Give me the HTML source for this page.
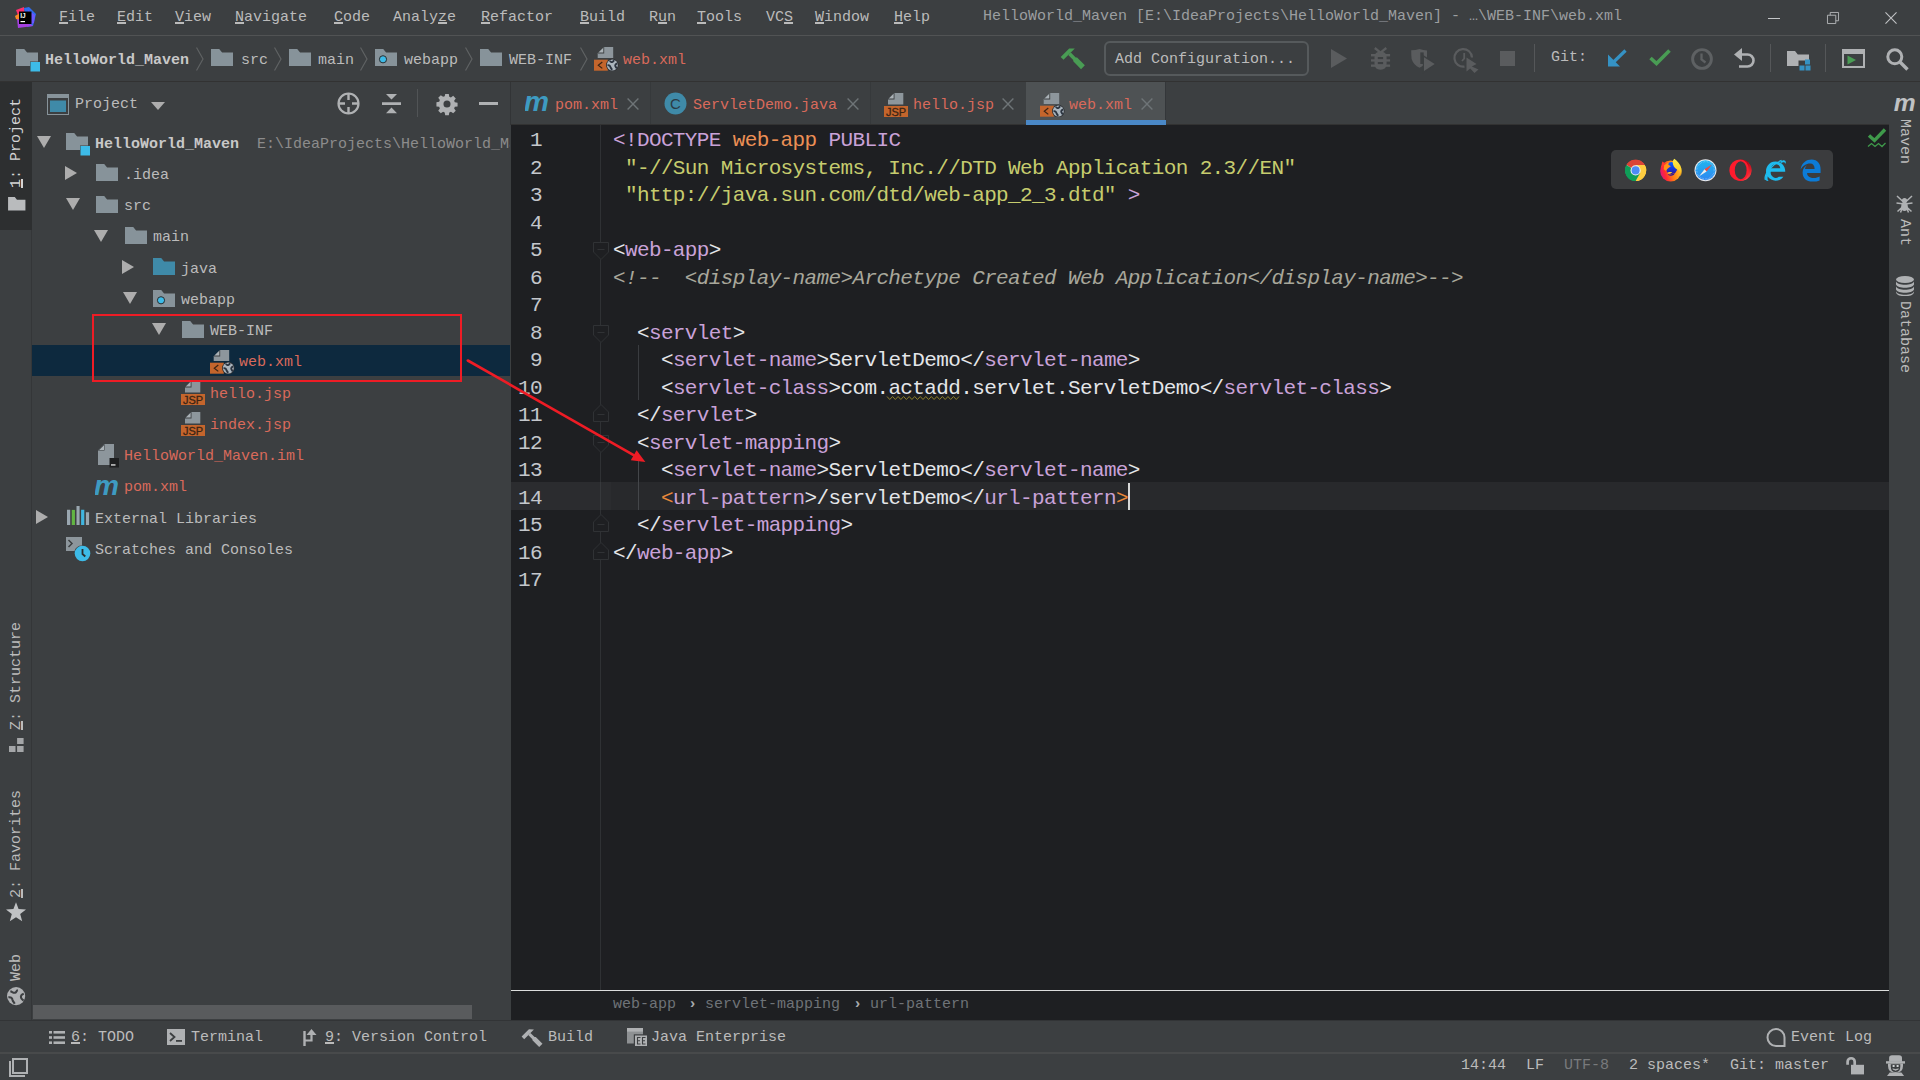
<!DOCTYPE html>
<html lang="en">
<head>
<meta charset="utf-8">
<title>HelloWorld_Maven - web.xml</title>
<style>
*{box-sizing:border-box;margin:0;padding:0}
html,body{width:1920px;height:1080px;overflow:hidden;background:#3c3f41}
body{position:relative;font-family:"Liberation Mono","DejaVu Sans Mono",monospace;font-size:15px;color:#bbbbbb;-webkit-font-smoothing:antialiased}
.a{position:absolute}
.t{position:absolute;white-space:pre;line-height:20px;height:20px;font-size:15px;color:#bbbbbb}
.u{text-decoration:underline;text-underline-offset:0.500px;text-decoration-thickness:1.500px}
.red{color:#d96a5b}
.dim{color:#8c8c8c}
.v{position:absolute;white-space:pre;font-size:15px;line-height:20px;height:20px;transform-origin:0 0;transform:rotate(-90deg)}
.vr{position:absolute;white-space:pre;font-size:15px;line-height:20px;height:20px;transform-origin:0 0;transform:rotate(90deg)}
svg{position:absolute;overflow:visible}
/* editor */
#ed{position:absolute;left:511px;top:125px;width:1378px;height:896px;background:#1e1f22}
.ln{position:absolute;left:0;width:31px;text-align:right;font-size:21px;letter-spacing:-0.63px;line-height:28px;height:28px;margin-top:2px;color:#c4c7cc;white-space:pre}
.cl{position:absolute;left:102px;font-size:21px;letter-spacing:-0.63px;line-height:28px;height:28px;margin-top:2px;color:#e4e6e9;white-space:pre}
.tg{color:#c9a2d8}
.st{color:#c6cc6e}
.kw{color:#ec8f55}
.cm{color:#a8a79b;font-style:italic}
.or{color:#e8883a}
</style>
</head>
<body>
<svg width="0" height="0" style="left:0;top:0">
<defs>
<symbol id="fold" viewBox="0 0 22 17"><path d="M0 0h8.2l2.9 3.6H22V17H0z" fill="#87939a"/></symbol>
<symbol id="foldb" viewBox="0 0 22 17"><path d="M0 0h8.2l2.9 3.6H22V17H0z" fill="#3f8aa8"/></symbol>
<symbol id="foldw" viewBox="0 0 22 17"><path d="M0 0h8.2l2.9 3.6H22V17H0z" fill="#87939a"/><circle cx="8" cy="10.3" r="3.6" fill="#3dbbe8" stroke="#2b2d2e" stroke-width="1"/></symbol>
<symbol id="foldm" viewBox="0 0 24 23"><path d="M0 0h8.2l2.9 3.6H22V12.5H14V17H0z" fill="#87939a"/><rect x="14.5" y="13" width="9.5" height="9.5" fill="#3dbbe8"/></symbol>
<symbol id="chev" viewBox="0 0 8 24"><path d="M0.5 0.5L7 12L0.5 23.5" fill="none" stroke="#5f6263" stroke-width="1.2"/></symbol>
<symbol id="webxml" viewBox="0 0 25 24"><path d="M3.700 11V6.500L10.200 0H19.200V11z" fill="#8d969c"/><path d="M3.700 6.500L10.200 0V6.500z" fill="#3c3f41"/><path d="M4.500 5.600L9.300 0.800V5.600z" fill="#aab2b7"/><rect x="0" y="12.700" width="13.800" height="11" fill="#c4652c"/><path d="M8.300 15L4.300 18.200L8.300 21.400" fill="none" stroke="#3b2414" stroke-width="1.200"/><circle cx="18.300" cy="18.100" r="6.300" fill="#2b2d30"/><circle cx="18.300" cy="18.100" r="5.500" fill="#aab5be"/><path d="M16 13.600c.3 1.500 1.600 1.700 2.600 1.300c1-.5 1.200-1.300 1-2M13.500 18.500c1-.6 2.400-.2 2.700 1c.3 1.300 1.200 2 1.800 3.300M23.300 16.500c-1.300.2-2.400 1.200-2 2.600c.3 1.100 1.400 1.500 1.500 2.600" fill="none" stroke="#2b3440" stroke-width="1.900"/></symbol>
<symbol id="jsp" viewBox="0 0 24 24"><path d="M4 11.500V6.500L10.500 0H19.300V11.500z" fill="#8d969c"/><path d="M4 6.500L10.500 0V6.500z" fill="#3c3f41"/><path d="M4.800 5.600L9.600 0.800V5.600z" fill="#aab2b7"/><rect x="0" y="13" width="24" height="11" fill="#c4652c"/><text x="12" y="22.600" font-family="Liberation Sans,sans-serif" font-size="11" text-anchor="middle" fill="#3b2414" stroke="#3b2414" stroke-width="0.300">JSP</text></symbol>
<symbol id="mvn" viewBox="0 0 24 16"><text x="-1" y="15.5" font-family="Liberation Sans,sans-serif" font-weight="bold" font-style="italic" font-size="27" fill="#3e9bc2" textLength="25" lengthAdjust="spacingAndGlyphs">m</text></symbol>
<symbol id="x" viewBox="0 0 12 12"><path d="M0.600 0.600L11.400 11.400M11.400 0.600L0.600 11.400" fill="none" stroke="#6e7477" stroke-width="1.400"/></symbol>
<symbol id="ad" viewBox="0 0 14 12"><path d="M0 0H14L7 12z" fill="#adadad"/></symbol>
<symbol id="ar" viewBox="0 0 12 14"><path d="M0 0L12 7L0 14z" fill="#adadad"/></symbol>
</defs>
</svg>
<!-- MENU BAR -->
<div class="a" id="menubar" style="left:0;top:0;width:1920px;height:35px;background:#3c3f41"></div>
<div class="a" style="left:0;top:35px;width:1920px;height:1px;background:#515354"></div>
<svg style="left:15px;top:7px" width="21" height="21" viewBox="0 0 21 21">
<path d="M1 3L9 0L10 8L4 11z" fill="#fc2f6e"/><path d="M0 9L5 6L6 14L1 12z" fill="#fd8a26"/><path d="M9 1L14 0L21 7L18 19L12 20z" fill="#2f6df0"/><path d="M2 12L12 14L18 19L3 21z" fill="#a63fe0"/><path d="M13 3L20 8L19 16L14 18z" fill="#6b57ff"/>
<rect x="4" y="4.5" width="12.5" height="12.5" fill="#000"/><rect x="5.5" y="14" width="4.5" height="1.2" fill="#fff"/>
<text x="5.2" y="11.3" font-family="Liberation Sans,sans-serif" font-weight="bold" font-size="6.5" fill="#fff">IJ</text></svg>
<div class="t" style="left:59px;top:8px"><span class="u">F</span>ile</div>
<div class="t" style="left:117px;top:8px"><span class="u">E</span>dit</div>
<div class="t" style="left:175px;top:8px"><span class="u">V</span>iew</div>
<div class="t" style="left:235px;top:8px"><span class="u">N</span>avigate</div>
<div class="t" style="left:334px;top:8px"><span class="u">C</span>ode</div>
<div class="t" style="left:393px;top:8px">Analy<span class="u">z</span>e</div>
<div class="t" style="left:481px;top:8px"><span class="u">R</span>efactor</div>
<div class="t" style="left:580px;top:8px"><span class="u">B</span>uild</div>
<div class="t" style="left:649px;top:8px">R<span class="u">u</span>n</div>
<div class="t" style="left:697px;top:8px"><span class="u">T</span>ools</div>
<div class="t" style="left:766px;top:8px">VC<span class="u">S</span></div>
<div class="t" style="left:815px;top:8px"><span class="u">W</span>indow</div>
<div class="t" style="left:894px;top:8px"><span class="u">H</span>elp</div>
<div class="t" style="left:983px;top:7px;color:#9b9ea0">HelloWorld_Maven [E:\IdeaProjects\HelloWorld_Maven] - …\WEB-INF\web.xml</div>
<svg style="left:1768px;top:18px" width="12" height="1" viewBox="0 0 12 1"><rect width="12" height="1" fill="#c4c6c8"/></svg>
<svg style="left:1827px;top:12px" width="12" height="12" viewBox="0 0 13 13"><path d="M0.5 3.5h9v9h-9zM3.5 3.5v-3h9v9h-3" fill="none" stroke="#b4b6b8" stroke-width="1"/></svg>
<svg style="left:1885px;top:12px" width="12" height="12" viewBox="0 0 13 13"><path d="M0.5 0.5L12.5 12.5M12.5 0.5L0.5 12.5" fill="none" stroke="#c0c2c4" stroke-width="1.2"/></svg>
<!-- NAV BAR -->
<div class="a" id="navbar" style="left:0;top:36px;width:1920px;height:45px;background:#3c3f41"></div>
<div class="a" style="left:0;top:81px;width:1920px;height:1px;background:#323232"></div>
<svg style="left:16px;top:49px" width="24" height="23"><use href="#foldm"/></svg>
<div class="t" style="left:45px;top:51px;font-weight:bold;color:#c8c8c8">HelloWorld_Maven</div>
<svg style="left:196px;top:47px" width="8" height="24"><use href="#chev"/></svg>
<svg style="left:211px;top:49px" width="22" height="17"><use href="#fold"/></svg>
<div class="t" style="left:241px;top:51px">src</div>
<svg style="left:274px;top:47px" width="8" height="24"><use href="#chev"/></svg>
<svg style="left:289px;top:49px" width="22" height="17"><use href="#fold"/></svg>
<div class="t" style="left:318px;top:51px">main</div>
<svg style="left:360px;top:47px" width="8" height="24"><use href="#chev"/></svg>
<svg style="left:375px;top:49px" width="22" height="17"><use href="#foldw"/></svg>
<div class="t" style="left:404px;top:51px">webapp</div>
<svg style="left:465px;top:47px" width="8" height="24"><use href="#chev"/></svg>
<svg style="left:480px;top:49px" width="22" height="17"><use href="#fold"/></svg>
<div class="t" style="left:509px;top:51px">WEB-INF</div>
<svg style="left:580px;top:47px" width="8" height="24"><use href="#chev"/></svg>
<svg style="left:594px;top:47px" width="25" height="24"><use href="#webxml"/></svg>
<div class="t red" style="left:623px;top:51px">web.xml</div>
<svg style="left:1060px;top:47px" width="26" height="23" viewBox="0 0 26 23"><g transform="translate(7.400,6.100) rotate(-45)" fill="#499c54"><path d="M-7.500 -2H4.500L8.500 2H-7.500z"/><path d="M-0.800 2H2.800V9L3.700 10V21H-1.700V10L-0.800 9z"/></g></svg>
<div class="a" style="left:1104px;top:41px;width:205px;height:35px;border:2px solid #565a5c;border-radius:6px"></div>
<div class="t" style="left:1115px;top:50px">Add Configuration...</div>
<svg style="left:1331px;top:49px" width="16" height="19" viewBox="0 0 16 19"><path d="M0 0L16 9.500L0 19z" fill="#5a5c5e"/></svg>
<svg style="left:1370px;top:47px" width="21" height="23" viewBox="0 0 21 23"><g fill="#5a5c5e"><path d="M4.500 10Q4.500 4.800 10.500 4.800Q16.600 4.800 16.600 10V16.500Q16.600 22.700 10.500 22.700Q4.500 22.700 4.500 16.500z"/><rect x="1" y="7" width="19.100" height="2.400"/><rect x="1" y="12.300" width="19.100" height="2.300"/><rect x="1" y="17.500" width="19.100" height="2.300"/></g><path d="M4.800 1L10.500 5.600L16.300 1" fill="none" stroke="#5a5c5e" stroke-width="2.300"/><rect x="7.800" y="10" width="5.300" height="2.100" fill="#3c3f41"/><rect x="7.800" y="15" width="5.300" height="2.100" fill="#3c3f41"/></svg>
<svg style="left:1411px;top:49px" width="24" height="23" viewBox="0 0 24 23"><path d="M0.200 1.300Q4.500 1.200 8.500 -0.100Q12.500 1.200 16 1.500Q16.200 6 15.800 10Q14.500 16 8.500 18.800Q2.500 16 0.600 10Q0.200 6 0.200 1.300z" fill="#5a5c5e"/><rect x="9.300" y="3.400" width="3.400" height="11.600" fill="#3c3f41"/><path d="M11.800 5.800L25.800 15L11.800 24.200z" fill="#3c3f41"/><path d="M13 8.200L23.700 14.900L13 22z" fill="#5a5c5e"/></svg>
<svg style="left:1454px;top:48px" width="26" height="26" viewBox="0 0 26 26"><path d="M10.500 18.600A8.800 8.800 0 1 1 18 9.500" fill="none" stroke="#5a5c5e" stroke-width="2.200"/><path d="M10.200 5v5.500L8 13" fill="none" stroke="#5a5c5e" stroke-width="1.800"/><path d="M12.500 9.500L22.500 16L17.800 18.500L24.500 21.500L20.500 25L16.200 20.500L12.500 23.500z" fill="#5a5c5e"/></svg>
<div class="a" style="left:1500px;top:51px;width:15px;height:15px;background:#5a5c5e"></div>
<div class="a" style="left:1534px;top:44px;width:1px;height:28px;background:#555759"></div>
<div class="t" style="left:1551px;top:48px">Git:</div>
<svg style="left:1607px;top:49px" width="20" height="18" viewBox="0 0 20 18"><path d="M18.500 1.500L4 15.500" stroke="#3592c4" stroke-width="3.200" fill="none"/><path d="M1 5.500V17.500H13z" fill="#3592c4"/></svg>
<svg style="left:1649px;top:49px" width="22" height="17" viewBox="0 0 22 17"><path d="M1.500 9L7.500 14.500L20.500 1.500" stroke="#499c54" stroke-width="3.600" fill="none"/></svg>
<svg style="left:1691px;top:48px" width="22" height="22" viewBox="0 0 22 22"><circle cx="11" cy="11" r="9.400" fill="none" stroke="#5e6163" stroke-width="2.900"/><path d="M10.500 5.500v6l4 3" fill="none" stroke="#5e6163" stroke-width="2.300"/></svg>
<svg style="left:1734px;top:48px" width="22" height="20" viewBox="0 0 22 20"><path d="M0 6.500L8 0V13z" fill="#afb1b3"/><path d="M6 6.500H13.500A6 6 0 0 1 13.500 18.500H5" fill="none" stroke="#afb1b3" stroke-width="2.600"/></svg>
<div class="a" style="left:1770px;top:44px;width:1px;height:28px;background:#555759"></div>
<svg style="left:1787px;top:51px" width="24" height="20" viewBox="0 0 24 20"><path d="M0 0h8l2.800 3.500H22V9.500H11.500V15H0z" fill="#afb1b3"/><rect x="18" y="8.500" width="5" height="5" fill="#3592c4"/><rect x="12.500" y="14.500" width="5" height="5" fill="#3592c4"/><rect x="18.500" y="14.500" width="5" height="5" fill="#3592c4"/></svg>
<div class="a" style="left:1825px;top:44px;width:1px;height:28px;background:#555759"></div>
<svg style="left:1842px;top:49px" width="23" height="19" viewBox="0 0 23 19"><path d="M0 0H23V19H0zM2 5V17H21V5z" fill="#afb1b3" fill-rule="evenodd"/><path d="M5.500 6.500L14 11L5.500 15.500z" fill="#499c54"/></svg>
<svg style="left:1886px;top:48px" width="23" height="23" viewBox="0 0 23 23"><circle cx="8.800" cy="8.800" r="7" fill="none" stroke="#afb1b3" stroke-width="3"/><path d="M13.500 13.500L21.500 21.500" stroke="#afb1b3" stroke-width="3.400"/></svg>
<!-- LEFT STRIPE -->
<div class="a" id="lstripe" style="left:0;top:82px;width:32px;height:939px;background:#3c3f41"></div>
<div class="v" style="left:6.500px;top:730px"><span class="u">Z</span>: Structure</div>
<svg style="left:9px;top:738px" width="14.600" height="14" viewBox="0 0 14.600 14"><rect x="8.100" y="0" width="6.500" height="6" fill="#a4a6a8"/><rect x="0" y="8" width="6.500" height="6" fill="#a4a6a8"/><rect x="8.100" y="8" width="6.500" height="6" fill="#a4a6a8"/></svg>
<div class="v" style="left:6.500px;top:898px"><span class="u">2</span>: Favorites</div>
<svg style="left:6px;top:902px" width="20" height="19.500" viewBox="0 0 21 20"><path d="M10.500 0L13.200 7.200L21 7.600L14.900 12.400L17 20L10.500 15.700L4 20L6.100 12.400L0 7.600L7.800 7.200z" fill="#c0c2c4"/></svg>
<div class="v" style="left:6.500px;top:981px">Web</div>
<svg style="left:7px;top:987.300px" width="18.200" height="18.200" viewBox="0 0 19 19"><circle cx="9.500" cy="9.500" r="9.500" fill="#afb1b3"/><path d="M3.500 4.500c2 .5 3 2 5 1.500c1.500-.5 1.200-2.300 2.800-2.800M1.500 11c2-1 4 .4 4.300 2.500c.3 1.500 1.500 2.500 2.200 4M17.500 7c-2 .6-3.500 2-2.800 4.200c.5 1.500 2 2.200 2.500 3" fill="none" stroke="#3c3f41" stroke-width="2.200"/></svg>
<div class="a" style="left:31px;top:82px;width:1px;height:939px;background:#343638"></div>
<!-- PROJECT PANEL -->
<div class="a" id="proj" style="left:32px;top:82px;width:478px;height:939px;background:#3c3f41"></div>
<div class="a" style="left:0;top:82px;width:32px;height:148px;background:#2d2f30"></div>
<div class="v" style="left:6.500px;top:188px;color:#d4d4d4"><span class="u">1</span>: Project</div>
<svg style="left:7.500px;top:197px" width="17.500" height="13.500" viewBox="0 0 18 14"><path d="M0 0h7l2.200 2.800H18V14H0z" fill="#b9bbbd"/></svg>
<svg style="left:47px;top:94px" width="22" height="21" viewBox="0 0 22 21"><rect x="0.5" y="0.5" width="21" height="20" fill="#3c3f41" stroke="#87939a" stroke-width="1"/><rect x="0" y="0" width="22" height="4" fill="#87939a"/><rect x="3" y="6.5" width="16" height="11.5" fill="#3f8aa8"/></svg>
<div class="t" style="left:75px;top:95px">Project</div>
<svg style="left:151px;top:102px" width="14" height="8" viewBox="0 0 14 8"><path d="M0 0H14L7 8z" fill="#adadad"/></svg>
<svg style="left:337px;top:92px" width="23" height="23" viewBox="0 0 23 23"><circle cx="11.5" cy="11.5" r="10" fill="none" stroke="#afb1b3" stroke-width="2.2"/><path d="M11.5 1.5v6.5M11.5 15v6.5M1.5 11.5h6.5M15 11.5h6.5" stroke="#afb1b3" stroke-width="2.4" fill="none"/></svg>
<svg style="left:382px;top:94px" width="19" height="20" viewBox="0 0 19 20"><path d="M4 0H15L9.5 5.5zM0 8.2H19V11H0zM9.5 13.5L15 19.3H4z" fill="#afb1b3"/></svg>
<div class="a" style="left:417px;top:89px;width:1px;height:28px;background:#515456"></div>
<svg style="left:436.500px;top:93.500px" width="20" height="20" viewBox="0 0 21 21"><path fill="#afb1b3" fill-rule="evenodd" d="M8.6 0h3.8l.5 2.9 1.7.7 2.4-1.7 2.7 2.7-1.7 2.4.7 1.7 2.9.5v3.8l-2.9.5-.7 1.7 1.7 2.4-2.7 2.7-2.4-1.7-1.7.7-.5 2.9H8.6l-.5-2.9-1.7-.7-2.4 1.7-2.7-2.7 1.700-2.4-.7-1.700-2.900-.5V8.6l2.900-.500.700-1.700-1.700-2.400 2.700-2.700 2.400 1.700 1.700-.7zM10.500 6.800a3.700 3.700 0 1 0 0 7.400 3.700 3.700 0 0 0 0-7.400z"/></svg>
<div class="a" style="left:479px;top:102px;width:19px;height:3px;background:#afb1b3"></div>
<div class="a" style="left:510px;top:82px;width:1px;height:43px;background:#323436"></div>
<div class="a" id="tree" style="left:0;top:0;width:510px;height:1021px;overflow:hidden">
<div class="a" style="left:32px;top:345px;width:478px;height:31px;background:#0d293e"></div>
<svg style="left:37px;top:136px" width="14" height="12"><use href="#ad"/></svg>
<svg style="left:66px;top:133px" width="24" height="23"><use href="#foldm"/></svg>
<div class="t" style="left:95px;top:135px"><b style="color:#c8c8c8">HelloWorld_Maven</b><span class="dim">  E:\IdeaProjects\HelloWorld_Maven</span></div>
<svg style="left:65px;top:166px" width="12" height="14"><use href="#ar"/></svg>
<svg style="left:96px;top:164px" width="22" height="17"><use href="#fold"/></svg>
<div class="t" style="left:124px;top:166px">.idea</div>
<svg style="left:66px;top:198px" width="14" height="12"><use href="#ad"/></svg>
<svg style="left:96px;top:196px" width="22" height="17"><use href="#fold"/></svg>
<div class="t" style="left:124px;top:197px">src</div>
<svg style="left:94px;top:230px" width="14" height="12"><use href="#ad"/></svg>
<svg style="left:124.500px;top:227px" width="22" height="17"><use href="#fold"/></svg>
<div class="t" style="left:153px;top:228px">main</div>
<svg style="left:122px;top:260px" width="12" height="14"><use href="#ar"/></svg>
<svg style="left:153px;top:258px" width="22" height="17"><use href="#foldb"/></svg>
<div class="t" style="left:181px;top:260px">java</div>
<svg style="left:123px;top:292px" width="14" height="12"><use href="#ad"/></svg>
<svg style="left:153px;top:290px" width="22" height="17"><use href="#foldw"/></svg>
<div class="t" style="left:181px;top:291px">webapp</div>
<svg style="left:152px;top:323px" width="14" height="12"><use href="#ad"/></svg>
<svg style="left:182px;top:321px" width="22" height="17"><use href="#fold"/></svg>
<div class="t" style="left:210px;top:322px">WEB-INF</div>
<svg style="left:210px;top:350px" width="25" height="24"><use href="#webxml"/></svg>
<div class="t red" style="left:239px;top:353px">web.xml</div>
<svg style="left:181px;top:381px" width="24" height="24"><use href="#jsp"/></svg>
<div class="t red" style="left:210px;top:385px">hello.jsp</div>
<svg style="left:181px;top:412px" width="24" height="24"><use href="#jsp"/></svg>
<div class="t red" style="left:210px;top:416px">index.jsp</div>
<svg style="left:98px;top:444px" width="21" height="24" viewBox="0 0 21 24"><path d="M0 21V6.500L6.500 0H16V21z" fill="#8d969c"/><path d="M0 6.500L6.500 0V6.500z" fill="#3c3f41"/><path d="M1.200 6L6 1.200V6z" fill="#aab2b7"/><rect x="11.500" y="14" width="9.500" height="9.500" fill="#1e1f20"/><rect x="13" y="20.300" width="4.500" height="1.300" fill="#e8e8e8"/></svg>
<div class="t red" style="left:124px;top:447px">HelloWorld_Maven.iml</div>
<svg style="left:95px;top:479px" width="24" height="16"><use href="#mvn"/></svg>
<div class="t red" style="left:124px;top:478px">pom.xml</div>
<svg style="left:36px;top:510px" width="12" height="14"><use href="#ar"/></svg>
<svg style="left:66.500px;top:506.300px" width="22.300" height="19" viewBox="0 0 22.300 19"><rect x="0" y="3.750" width="3.200" height="15.250" fill="#9aa7b0"/><rect x="4.750" y="3.900" width="3.200" height="15.100" fill="#62b543"/><rect x="9.500" y="0" width="3.100" height="19" fill="#9aa7b0"/><rect x="14.100" y="3.750" width="3.200" height="15.250" fill="#40b6e0"/><rect x="18.900" y="6.250" width="3.200" height="12.750" fill="#9aa7b0"/></svg>
<div class="t" style="left:95px;top:510px">External Libraries</div>
<svg style="left:66px;top:537px" width="25" height="25" viewBox="0 0 25 25"><path d="M0 0H16V8.500A8 8 0 0 0 8.500 14H0z" fill="#8d969c"/><path d="M2.500 3L6 6.500L2.500 10" fill="none" stroke="#3c3f41" stroke-width="1.500"/><circle cx="16.500" cy="16.500" r="7.800" fill="#3dbbe8"/><path d="M16.500 12v5l2.800 2.500" fill="none" stroke="#2b2d2e" stroke-width="1.800"/></svg>
<div class="t" style="left:95px;top:541px">Scratches and Consoles</div>
</div>
<div class="a" style="left:33px;top:1005px;width:439px;height:14px;background:#595b5d"></div>
<div class="a" style="left:92px;top:314px;width:370px;height:68px;border:2px solid #ee1c25"></div>
<!-- EDITOR TABS -->
<div class="a" id="tabs" style="left:511px;top:82px;width:1378px;height:43px;background:#3c3f41"></div>
<div class="a" style="left:1026px;top:82px;width:139px;height:43px;background:#4e5254"></div>
<div class="a" style="left:511px;top:124px;width:1378px;height:1px;background:#323232"></div>
<div class="a" style="left:1165px;top:82px;width:1px;height:38px;background:#34373a"></div>
<div class="a" style="left:1026px;top:120px;width:140px;height:5px;background:#4a88c7"></div>
<div class="a" style="left:650px;top:82px;width:1px;height:42px;background:#36393b"></div>
<div class="a" style="left:870px;top:82px;width:1px;height:42px;background:#36393b"></div>
<svg style="left:525px;top:95px" width="24" height="16"><use href="#mvn"/></svg>
<div class="t red" style="left:555px;top:96px">pom.xml</div>
<svg style="left:627px;top:98px" width="12" height="12"><use href="#x"/></svg>
<svg style="left:664px;top:92px" width="23" height="23" viewBox="0 0 23 23"><circle cx="11.500" cy="11.500" r="11" fill="#3f8aa8"/><text x="11.500" y="16.500" text-anchor="middle" font-family="Liberation Sans,sans-serif" font-size="15" fill="#2b3b44">C</text></svg>
<div class="t red" style="left:693px;top:96px">ServletDemo.java</div>
<svg style="left:847px;top:98px" width="12" height="12"><use href="#x"/></svg>
<svg style="left:884px;top:93px" width="24" height="24"><use href="#jsp"/></svg>
<div class="t red" style="left:913px;top:96px">hello.jsp</div>
<svg style="left:1002px;top:98px" width="12" height="12"><use href="#x"/></svg>
<svg style="left:1040px;top:93px" width="25" height="24"><use href="#webxml"/></svg>
<div class="t red" style="left:1069px;top:96px">web.xml</div>
<svg style="left:1141px;top:98px" width="12" height="12"><use href="#x"/></svg>
<!-- EDITOR -->
<div id="ed">
<div class="a" style="left:89px;top:0;width:1px;height:865px;background:#2f3134"></div>
<div class="a" style="left:0;top:357px;width:100px;height:28px;background:#2b2c2f"></div>
<div class="a" style="left:100px;top:357px;width:1278px;height:28px;background:#28292c"></div>
<div class="a" style="left:89px;top:357px;width:1px;height:28px;background:#37393c"></div>
<div class="a" style="left:127px;top:220px;width:1px;height:55px;background:#3a3c40"></div>
<div class="a" style="left:127px;top:330px;width:1px;height:55px;background:#44464a"></div>
<svg style="left:82px;top:117.0px" width="16" height="18" viewBox="0 0 16 18"><path d="M0.500 0.500H15.500V10L8 17.500L0.500 10z" fill="#1e1f22" stroke="#303235" stroke-width="1"/><path d="M4.500 7.500H11.500" stroke="#303235" stroke-width="1"/></svg><svg style="left:82px;top:199.5px" width="16" height="18" viewBox="0 0 16 18"><path d="M0.500 0.500H15.500V10L8 17.500L0.500 10z" fill="#1e1f22" stroke="#303235" stroke-width="1"/><path d="M4.500 7.500H11.500" stroke="#303235" stroke-width="1"/></svg><svg style="left:82px;top:279.0px" width="16" height="18" viewBox="0 0 16 18"><path d="M0.500 17.500H15.500V8L8 0.500L0.500 8z" fill="#1e1f22" stroke="#303235" stroke-width="1"/><path d="M4.500 10.500H11.500" stroke="#303235" stroke-width="1"/></svg><svg style="left:82px;top:309.5px" width="16" height="18" viewBox="0 0 16 18"><path d="M0.500 0.500H15.500V10L8 17.500L0.500 10z" fill="#1e1f22" stroke="#303235" stroke-width="1"/><path d="M4.500 7.500H11.500" stroke="#303235" stroke-width="1"/></svg><svg style="left:82px;top:389.0px" width="16" height="18" viewBox="0 0 16 18"><path d="M0.500 17.500H15.500V8L8 0.500L0.500 8z" fill="#1e1f22" stroke="#303235" stroke-width="1"/><path d="M4.500 10.500H11.500" stroke="#303235" stroke-width="1"/></svg><svg style="left:82px;top:416.5px" width="16" height="18" viewBox="0 0 16 18"><path d="M0.500 17.500H15.500V8L8 0.500L0.500 8z" fill="#1e1f22" stroke="#303235" stroke-width="1"/><path d="M4.500 10.500H11.500" stroke="#303235" stroke-width="1"/></svg>
<div class="a" style="left:0;top:865px;width:1378px;height:1px;background:#dcdddd"></div>
<div class="t" style="left:102px;top:870px;color:#6f7378">web-app</div>
<div class="t" style="left:177px;top:870px;color:#a8abae;font-weight:bold">›</div>
<div class="t" style="left:194px;top:870px;color:#6f7378">servlet-mapping</div>
<div class="t" style="left:342px;top:870px;color:#a8abae;font-weight:bold">›</div>
<div class="t" style="left:359px;top:870px;color:#6f7378">url-pattern</div>
<svg style="left:376px;top:271px" width="73" height="4" viewBox="0 0 73 4"><path d="M0.00 0.5L2.77 3.5L5.54 0.5L8.31 3.5L11.08 0.5L13.85 3.5L16.62 0.5L19.39 3.5L22.16 0.5L24.93 3.5L27.70 0.5L30.47 3.5L33.24 0.5L36.01 3.5L38.78 0.5L41.55 3.5L44.32 0.5L47.09 3.5L49.86 0.5L52.63 3.5L55.40 0.5L58.17 3.5L60.94 0.5L63.71 3.5L66.48 0.5L69.25 3.5L72.02 0.5" fill="none" stroke="#8d7f2b" stroke-width="1"/></svg>
<div class="a" style="left:617px;top:358px;width:2px;height:27px;background:#d8d8d8"></div>
<svg style="left:1356px;top:3px" width="20" height="21" viewBox="0 0 20 21"><path d="M2 7.500L7.500 12.500L18 1.500" fill="none" stroke="#3f9a4b" stroke-width="3.400"/><path d="M1 18.500L4.500 15.500L8 18.500L11.500 15.500L15 18.500L18.500 15" fill="none" stroke="#3f9a4b" stroke-width="1.300"/></svg>
<div class="a" style="left:1100px;top:25px;width:222px;height:39px;background:#3b3c3e;border-radius:5px"></div>
<div class="ln" style="top:0.0px">1</div>
<div class="cl" style="top:0.0px"><span class="tg">&lt;!DOCTYPE </span><span class="kw">web-app</span><span class="tg"> PUBLIC</span></div>
<div class="ln" style="top:27.5px">2</div>
<div class="cl" style="top:27.5px"><span class="st"> "-//Sun Microsystems, Inc.//DTD Web Application 2.3//EN"</span></div>
<div class="ln" style="top:55.0px">3</div>
<div class="cl" style="top:55.0px"><span class="st"> "http://java.sun.com/dtd/web-app_2_3.dtd"</span><span class="tg"> &gt;</span></div>
<div class="ln" style="top:82.5px">4</div>
<div class="ln" style="top:110.0px">5</div>
<div class="cl" style="top:110.0px">&lt;<span class="tg">web-app</span>&gt;</div>
<div class="ln" style="top:137.5px">6</div>
<div class="cl" style="top:137.5px"><span class="cm">&lt;!--  &lt;display-name&gt;Archetype Created Web Application&lt;/display-name&gt;--&gt;</span></div>
<div class="ln" style="top:165.0px">7</div>
<div class="ln" style="top:192.5px">8</div>
<div class="cl" style="top:192.5px">  &lt;<span class="tg">servlet</span>&gt;</div>
<div class="ln" style="top:220.0px">9</div>
<div class="cl" style="top:220.0px">    &lt;<span class="tg">servlet-name</span>&gt;ServletDemo&lt;/<span class="tg">servlet-name</span>&gt;</div>
<div class="ln" style="top:247.5px">10</div>
<div class="cl" style="top:247.5px">    &lt;<span class="tg">servlet-class</span>&gt;com.actadd.servlet.ServletDemo&lt;/<span class="tg">servlet-class</span>&gt;</div>
<div class="ln" style="top:275.0px">11</div>
<div class="cl" style="top:275.0px">  &lt;/<span class="tg">servlet</span>&gt;</div>
<div class="ln" style="top:302.5px">12</div>
<div class="cl" style="top:302.5px">  &lt;<span class="tg">servlet-mapping</span>&gt;</div>
<div class="ln" style="top:330.0px">13</div>
<div class="cl" style="top:330.0px">    &lt;<span class="tg">servlet-name</span>&gt;ServletDemo&lt;/<span class="tg">servlet-name</span>&gt;</div>
<div class="ln" style="top:357.5px">14</div>
<div class="cl" style="top:357.5px">    <span class="or">&lt;</span><span class="tg">url-pattern</span>&gt;/servletDemo&lt;/<span class="tg">url-pattern</span><span class="or">&gt;</span></div>
<div class="ln" style="top:385.0px">15</div>
<div class="cl" style="top:385.0px">  &lt;/<span class="tg">servlet-mapping</span>&gt;</div>
<div class="ln" style="top:412.5px">16</div>
<div class="cl" style="top:412.5px">&lt;/<span class="tg">web-app</span>&gt;</div>
<div class="ln" style="top:440.0px">17</div>
</div>
<svg style="left:1611px;top:150px" width="222" height="39" viewBox="1611 150 222 39">
<g transform="translate(1635.600,170.400) scale(0.960)"><circle r="10.600" fill="#fff"/><path d="M0 0L-9.530 -5.500A11 11 0 0 1 9.530 -5.500z" fill="#db4437"/><path d="M0 0L9.530 -5.500A11 11 0 0 1 0 11z" fill="#ffcd40"/><path d="M0 0L0 11A11 11 0 0 1 -9.530 -5.500z" fill="#0f9d58"/><path d="M0 -5.500H9.530A11 11 0 0 0 -9.530 -5.500z" fill="#db4437"/><path d="M4.760 2.750L0 11A11 11 0 0 0 9.530 -5.500H0z" fill="#ffcd40"/><path d="M-4.760 2.750L-9.530 -5.500A11 11 0 0 0 0 11L4.760 2.750z" fill="#0f9d58"/><circle r="5.300" fill="#f1f1f1"/><circle r="4.200" fill="#4c8bf5"/></g>
<g transform="translate(1670.700,170.300)"><defs><linearGradient id="ffg" x1="0" y1="0.650" x2="1" y2="0.350"><stop offset="0" stop-color="#e1127e"/><stop offset="0.220" stop-color="#ff2b33"/><stop offset="0.550" stop-color="#ff7f14"/><stop offset="1" stop-color="#ffc62a"/></linearGradient><linearGradient id="ffb" x1="0" y1="0" x2="0" y2="1"><stop offset="0" stop-color="#0a62ff"/><stop offset="0.600" stop-color="#1336d8"/><stop offset="1" stop-color="#2d1796"/></linearGradient><linearGradient id="ffy" x1="0" y1="0" x2="0" y2="1"><stop offset="0" stop-color="#fff04a"/><stop offset="0.600" stop-color="#ffd22e"/><stop offset="1" stop-color="#ff9d18"/></linearGradient></defs><circle cx="0" cy="0.700" r="10.500" fill="url(#ffg)"/><path d="M-9.800 -2.500L-8.400 -8.800L-4.200 -6.200z" fill="#ff3a2e"/><circle cx="0.800" cy="-2.300" r="5.900" fill="url(#ffb)"/><path d="M-3.500 -7.300L-1.900 -7.900L-2.300 -5.500L0.200 -4L-1.600 -2.900L-3.400 -1.300L-4.600 0.800L-7 -1L-6.500 -5z" fill="#ff9417"/><path d="M3.600 -11.500C6.500 -9.500 9.500 -6.500 10.800 -1.500C11.300 1.500 10.800 4 9.800 6C10 2.500 8.500 0 6 -1C3.500 -2.500 2.300 -5 2 -7.800C2 -9.500 2.800 -10.600 3.600 -11.500z" fill="url(#ffy)"/><path d="M-2.800 3.600C-0.500 4.600 2.500 4.200 4.300 2.500C3.800 4.800 1.800 5.800 -0.300 5.500C-1.500 5.200 -2.400 4.500 -2.800 3.600z" fill="#2a1596"/><path d="M-3.600 2.800C-2.500 1.500 -0.500 1.300 1.600 1.900C0.500 3.300 -1.800 3.900 -3.600 2.800z" fill="#ffd42e"/></g>
<g transform="translate(1705.500,170.300)"><defs><linearGradient id="sfg" x1="0" y1="0" x2="0" y2="1"><stop offset="0" stop-color="#1fb6ee"/><stop offset="1" stop-color="#2f86f2"/></linearGradient></defs><circle r="11" fill="#e6e8ec"/><circle r="10" fill="url(#sfg)"/><circle r="8.700" fill="none" stroke="#9fd0fb" stroke-width="1.300" stroke-dasharray="0.500 1.020" opacity="0.800"/><path d="M6.400 -5.700L1.100 1.200L-1 -1z" fill="#f4483c"/><path d="M-6.300 5.900L1.100 1.200L-1 -1z" fill="#eeeeee"/></g>
<g transform="translate(1740.300,170.200)"><defs><linearGradient id="opg" x1="0" y1="0" x2="0" y2="1"><stop offset="0" stop-color="#a3000f"/><stop offset="0.500" stop-color="#e0202c"/><stop offset="1" stop-color="#ff4d4d"/></linearGradient></defs><ellipse rx="10.900" ry="10.800" fill="#ff1b2d"/><path d="M0.400 -10.800A10.900 10.800 0 0 1 0.400 10.800A7.500 10 0 0 0 0.400 -10.800z" fill="url(#opg)"/><ellipse cx="0.400" rx="5.900" ry="9" fill="#3b3c3e"/></g>
<g transform="translate(1775.600,170.400)"><path d="M-8.500 1.300H9.600A9.600 9.600 0 1 0 7.800 6.300H3.200A5 5 0 0 1 -4.800 1.300z M-4.600 -2.200A4.700 4.700 0 0 1 4.700 -2.200z" fill="#1ebbee" fill-rule="evenodd"/><path d="M-8 1.500C-11.500 7 -11 11 -7 10.500C-9 9 -8 5 -6 2M4.500 -8.500C8 -11 11 -10.500 10 -6.500C9.500 -8.500 7.500 -8.500 5.500 -7.500z" fill="#1ebbee"/><path d="M-10.200 9.500C-12 4 -4 -6 6 -10" fill="none" stroke="#1ebbee" stroke-width="1.300"/></g>
<g transform="translate(1810.600,170.400)"><path d="M-10 -1C-9 -8 -4 -11 1 -11C7 -11 10 -6.500 10 -1V2.500H-3.500C-3.500 6 -0.500 7.500 3 7.500C5.500 7.500 7.500 6.800 9 6V10C7 10.800 5 11.200 2 11.200C-4.500 11.200 -8 7.500 -8 2C-8 -1.500 -6 -4 -3.500 -5.200C-5 -4 -5.500 -2.500 -5.500 -1.500H4C4 -5 2.500 -7 -0.500 -7C-4.500 -7 -8 -4.500 -10 -1z" fill="#0c7bd6"/></g>
</svg>
<svg style="left:0;top:0" width="1920" height="1080" viewBox="0 0 1920 1080"><path d="M467.8 360.5L635.4 456.2" stroke="#ee1c25" stroke-width="2.600" stroke-linecap="round" fill="none"/><path d="M645.4 461.9L630.8 460.2L636.6 450.2z" fill="#ee1c25"/></svg>
<!-- RIGHT STRIPE -->
<div class="a" id="rstripe" style="left:1889px;top:82px;width:31px;height:939px;background:#3c3f41"></div>
<svg style="left:1894px;top:97px" width="22" height="14" viewBox="0 0 24 16"><text x="-1" y="15.500" font-family="Liberation Sans,sans-serif" font-weight="bold" font-style="italic" font-size="27" fill="#c0c2c4" textLength="25" lengthAdjust="spacingAndGlyphs">m</text></svg>
<div class="vr" style="left:1914px;top:119px">Maven</div>
<svg style="left:1896px;top:194px" width="17" height="19" viewBox="0 0 17 19"><g fill="none" stroke="#afb1b3" stroke-width="1.500"><path d="M8.500 9L1 2M8.500 9L16 2M8.500 10L0.500 9M8.500 10L16.500 9M8.500 11L1.500 17.500M8.500 11L15.500 17.500M7 12L4.500 18.500M10 12L12.500 18.500"/></g><ellipse cx="8.500" cy="12.500" rx="3.300" ry="4.500" fill="#afb1b3"/><circle cx="8.500" cy="6.500" r="2.600" fill="#afb1b3"/></svg>
<div class="vr" style="left:1914px;top:219px">Ant</div>
<svg style="left:1896px;top:276px" width="18" height="20" viewBox="0 0 18 20"><g fill="#afb1b3"><ellipse cx="9" cy="3.500" rx="9" ry="3.500"/><path d="M0 5.500c1 2.500 4.500 3.200 9 3.200s8-.7 9-3.200V8.500c-1 2.500-4.500 3.200-9 3.200S1 11 0 8.500z"/><path d="M0 10.500c1 2.500 4.500 3.200 9 3.200s8-.7 9-3.200V13.500c-1 2.500-4.500 3.200-9 3.200S1 16 0 13.500z"/><path d="M0 15.500c1 2.500 4.500 3.200 9 3.200s8-.7 9-3.200V16.500c-1 3-4.500 3.500-9 3.500S1 19.500 0 16.500z"/></g></svg>
<div class="vr" style="left:1914px;top:301px">Database</div>
<!-- BOTTOM TOOL BAR -->
<div class="a" id="btools" style="left:0;top:1021px;width:1920px;height:31px;background:#3c3f41"></div>
<div class="a" style="left:0;top:1020px;width:1920px;height:1px;background:#323436"></div>
<svg style="left:49px;top:1031px" width="16" height="13" viewBox="0 0 16 13"><g fill="#afb1b3"><rect x="0" y="0" width="3" height="2.600"/><rect x="4.500" y="0" width="11.500" height="2.600"/><rect x="0" y="5.200" width="3" height="2.600"/><rect x="4.500" y="5.200" width="11.500" height="2.600"/><rect x="0" y="10.400" width="3" height="2.600"/><rect x="4.500" y="10.400" width="11.500" height="2.600"/></g></svg>
<div class="t" style="left:71px;top:1028px"><span class="u">6</span>: TODO</div>
<svg style="left:167px;top:1029px" width="18" height="16" viewBox="0 0 18 16"><rect width="18" height="16" fill="#afb1b3"/><path d="M3 4L7.500 8L3 12" fill="none" stroke="#3c3f41" stroke-width="1.800"/><rect x="9" y="11" width="6" height="1.800" fill="#3c3f41"/></svg>
<div class="t" style="left:191px;top:1028px">Terminal</div>
<svg style="left:302px;top:1028px" width="18" height="18" viewBox="0 0 18 18"><path d="M2.500 3V18" stroke="#afb1b3" stroke-width="2.400" fill="none"/><path d="M2.500 12.500H9.500V5" stroke="#afb1b3" stroke-width="2.200" fill="none"/><path d="M4.500 7L9.500 1L14.500 7z" fill="#afb1b3"/></svg>
<div class="t" style="left:325px;top:1028px"><span class="u">9</span>: Version Control</div>
<svg style="left:521px;top:1028px" width="22" height="20" viewBox="0 0 22 20"><g transform="translate(6.500,5.300) rotate(-45)" fill="#afb1b3"><path d="M-6.500 -1.800H3.800L7.300 1.800H-6.500z"/><path d="M-0.700 1.800H2.400V7.600L3.200 8.500V18H-1.500V8.500L-0.700 7.600z"/></g></svg>
<div class="t" style="left:548px;top:1028px">Build</div>
<svg style="left:627px;top:1028px" width="20" height="18" viewBox="0 0 20 18"><rect x="0" y="0" width="16" height="15.500" fill="#8e9193"/><rect x="0" y="0" width="16" height="3.600" fill="#afb1b3"/><rect x="6.800" y="6.300" width="13.200" height="11.700" fill="#3c3f41"/><rect x="8" y="7.500" width="12" height="10.500" fill="#afb1b3"/><path d="M10 9.500h3.500M10 12.700h3M10 16h3.500M10.500 9.500v6.500M15 9.500h3.500M15 12.700h3M15 16h3.500M15.500 9.500v6.500" stroke="#3c3f41" stroke-width="1.100" fill="none"/></svg>
<div class="t" style="left:651px;top:1028px">Java Enterprise</div>
<svg style="left:1766px;top:1028px" width="20" height="19" viewBox="0 0 20 19"><path d="M18.500 9.500A8.500 8.500 0 1 0 10 18H18.500z" fill="none" stroke="#afb1b3" stroke-width="2"/></svg>
<div class="t" style="left:1791px;top:1028px">Event Log</div>
<!-- STATUS BAR -->
<div class="a" id="status" style="left:0;top:1052px;width:1920px;height:28px;background:#3c3f41"></div>
<div class="a" style="left:0;top:1052px;width:1920px;height:2px;background:#484a4b"></div>
<svg style="left:9px;top:1058px" width="20" height="20" viewBox="9 1058 20 20"><rect x="13" y="1059" width="14" height="14" fill="none" stroke="#afb1b3" stroke-width="2"/><path d="M10 1061V1076H25" fill="none" stroke="#afb1b3" stroke-width="2"/></svg>
<div class="t" style="left:1461px;top:1056px">14:44</div>
<div class="t" style="left:1526px;top:1056px">LF</div>
<div class="t" style="left:1564px;top:1056px;color:#787a7c">UTF-8</div>
<div class="t" style="left:1629px;top:1056px">2 spaces*</div>
<div class="t" style="left:1730px;top:1056px">Git: master</div>
<svg style="left:1846px;top:1057px" width="19" height="18" viewBox="0 0 19 18"><path d="M1.600 7.800V4.800A3.550 3.550 0 0 1 8.700 4.800V8" fill="none" stroke="#afb1b3" stroke-width="2.700"/><rect x="5" y="7.800" width="13" height="9.600" fill="#afb1b3"/></svg>
<svg style="left:1886px;top:1055px" width="20" height="22" viewBox="1886 1055 20 22"><g fill="#afb1b3"><path d="M1889.100 1061.800V1058Q1889.100 1055.200 1892 1055.200H1899.100Q1902 1055.200 1902 1058V1061.800z"/><rect x="1886" y="1061.200" width="19" height="2.400"/><path d="M1888 1063.500H1903V1066Q1903 1072.800 1895.500 1072.800Q1888 1072.800 1888 1066z"/><path d="M1889.700 1072.600H1901.400L1904.100 1076.100H1887z"/></g><path d="M1890.800 1064.300H1900.300V1066.500Q1900.300 1072 1895.500 1072Q1890.800 1072 1890.800 1066.500z" fill="#3c3f41"/><rect x="1892.600" y="1065" width="2" height="2" fill="#d0d2d4"/><rect x="1896.600" y="1065" width="2" height="2" fill="#d0d2d4"/><path d="M1892.700 1068.900Q1895.600 1071.600 1898.500 1068.900Q1895.600 1070 1892.700 1068.900z" fill="#c4c6c8" stroke="#c4c6c8" stroke-width="0.600"/></svg>
</body>
</html>
